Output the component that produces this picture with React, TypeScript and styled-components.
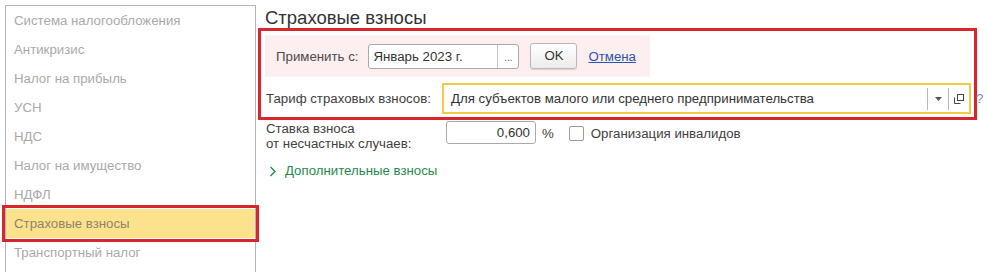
import React from "react";
import styled, { createGlobalStyle } from "styled-components";

const GlobalStyle = createGlobalStyle`
  html, body {
    margin: 0;
    padding: 0;
    background: #ffffff;
    overflow: hidden;
  }
  body {
    font-family: "Liberation Sans", Arial, sans-serif;
    font-size: 13.25px;
    color: #404040;
  }
`;

const sections = [
  "Система налогообложения",
  "Антикризис",
  "Налог на прибыль",
  "УСН",
  "НДС",
  "Налог на имущество",
  "НДФЛ",
  "Страховые взносы",
  "Транспортный налог",
];

const App = () => {
  const selected = "Страховые взносы";

  return (
    <>
      <GlobalStyle />
      <Page>
        <Sidebar>
          {sections.map((item) => (
            <SideItem key={item} $active={item === selected}>
              {item}
            </SideItem>
          ))}
        </Sidebar>

        <Main>
          <Title>Страховые взносы</Title>

          <Highlight>
            <ApplyBar>
              <Label>Применить с:</Label>
              <PeriodField>
                <PeriodValue>Январь 2023 г.</PeriodValue>
                <PickButton>...</PickButton>
              </PeriodField>
              <OkButton>OK</OkButton>
              <CancelLink>Отмена</CancelLink>
            </ApplyBar>

            <TariffRow>
              <TariffLabel>Тариф страховых взносов:</TariffLabel>
              <Select>
                <SelectText>
                  Для субъектов малого или среднего предпринимательства
                </SelectText>
                <SelectButton>
                  <svg width="7" height="4" viewBox="0 0 7 4">
                    <path d="M0 0 H7 L3.5 4 Z" fill="#555" />
                  </svg>
                </SelectButton>
                <SelectButton>
                  <svg width="10" height="10" viewBox="0 0 10 10">
                    <rect
                      x="3.5"
                      y="0.5"
                      width="6"
                      height="6"
                      fill="none"
                      stroke="#444"
                    />
                    <path d="M0.5 3.5 V9.5 H6.5" fill="none" stroke="#444" />
                  </svg>
                </SelectButton>
              </Select>
              <Help>?</Help>
            </TariffRow>
          </Highlight>

          <RateRow>
            <RateLabel>
              Ставка взноса
              <br />
              от несчастных случаев:
            </RateLabel>
            <NumberField>0,600</NumberField>
            <Unit>%</Unit>
            <CheckBox />
            <CheckText>Организация инвалидов</CheckText>
          </RateRow>

          <ExtraLink>
            <svg width="8" height="11" viewBox="0 0 8 11">
              <path
                d="M1.5 1 L6 5.5 L1.5 10"
                fill="none"
                stroke="#1f8a4c"
                strokeWidth="1.4"
              />
            </svg>
            <span>Дополнительные взносы</span>
          </ExtraLink>
        </Main>
      </Page>
    </>
  );
};

export default App;

const Page = styled.div`
  display: flex;
  align-items: flex-start;
  width: 987px;
  height: 272px;
  overflow: hidden;
`;

const Sidebar = styled.div`
  box-sizing: border-box;
  flex-shrink: 0;
  width: 251px;
  height: 267px;
  margin: 5px 0 0 5px;
  border: 1px solid #b4b4b4;
  border-bottom: none;
`;

const SideItem = styled.div<{ $active?: boolean }>`
  height: 29px;
  line-height: 29px;
  padding-left: 8px;
  color: ${(p) => (p.$active ? "#8c8569" : "#a9a9a9")};
  background: ${(p) => (p.$active ? "#fde28e" : "transparent")};
  outline: ${(p) => (p.$active ? "3px solid #d7262e" : "none")};
  outline-offset: 1px;
  position: relative;
`;

const Main = styled.div`
  display: flex;
  flex-direction: column;
  align-items: flex-start;
`;

const Title = styled.div`
  margin: 8px 0 0 9px;
  font-size: 18.5px;
  line-height: 20px;
  color: #333333;
`;

const Highlight = styled.div`
  box-sizing: border-box;
  width: 719px;
  height: 92px;
  margin: 0 0 0 2px;
  border: 3px solid #d7262e;
  padding: 4px 0 0 4px;
`;

const ApplyBar = styled.div`
  display: flex;
  align-items: center;
  width: 385px;
  height: 42px;
  box-sizing: border-box;
  padding-left: 11px;
  background: #fdeef0;
`;

const Label = styled.span`
  color: #4a4a4a;
  margin-right: 10px;
`;

const PeriodField = styled.div`
  box-sizing: border-box;
  display: flex;
  width: 151px;
  height: 25px;
  border: 1px solid #a9a9a9;
  border-radius: 3px;
  background: #ffffff;
  margin-top: 1px;
`;

const PeriodValue = styled.div`
  flex: 1;
  padding-left: 4px;
  line-height: 23px;
  color: #333;
`;

const PickButton = styled.div`
  width: 20px;
  border-left: 1px solid #c4c4c4;
  text-align: center;
  line-height: 25px;
  font-size: 10px;
  color: #555;
`;

const OkButton = styled.div`
  box-sizing: border-box;
  width: 47px;
  height: 26px;
  margin-left: 11px;
  border: 1px solid #b9b9b9;
  border-radius: 3px;
  background: linear-gradient(#ffffff, #ececec);
  box-shadow: 0 1px 1px rgba(0, 0, 0, 0.12);
  text-align: center;
  line-height: 24px;
  color: #333;
`;

const CancelLink = styled.span`
  margin-left: 11px;
  color: #2a55a8;
  text-decoration: underline;
`;

const TariffRow = styled.div`
  display: flex;
  align-items: center;
  margin-top: 6px;
  margin-left: 1px;
  width: 720px;
`;

const TariffLabel = styled.span`
  flex-shrink: 0;
  width: 176px;
  color: #404040;
`;

const Select = styled.div`
  box-sizing: border-box;
  flex-shrink: 0;
  display: flex;
  align-items: center;
  width: 529px;
  height: 31px;
  border: 2px solid #f0cb44;
  background: #ffffff;
`;

const SelectText = styled.div`
  flex: 1;
  padding-left: 7px;
  color: #333;
  white-space: nowrap;
`;

const SelectButton = styled.div`
  display: flex;
  align-items: center;
  justify-content: center;
  width: 20px;
  height: 22px;
  border-left: 1px solid #b8b8b8;
`;

const Help = styled.span`
  margin-left: 5px;
  color: #6d8fc8;
`;

const RateRow = styled.div`
  display: flex;
  align-items: center;
  margin: 1px 0 0 10px;
`;

const RateLabel = styled.div`
  width: 180px;
  line-height: 15px;
  color: #404040;
`;

const NumberField = styled.div`
  box-sizing: border-box;
  width: 90px;
  height: 23px;
  margin-top: -7px;
  padding-right: 5px;
  border: 1px solid #a9a9a9;
  border-radius: 3px;
  text-align: right;
  line-height: 21px;
  color: #333;
`;

const Unit = styled.span`
  margin: -6px 0 0 6px;
`;

const CheckBox = styled.div`
  box-sizing: border-box;
  width: 15px;
  height: 15px;
  margin: -6px 0 0 15px;
  border: 1px solid #9a9a9a;
  border-radius: 2px;
  background: #fff;
`;

const CheckText = styled.span`
  margin: -6px 0 0 7px;
  color: #404040;
`;

const ExtraLink = styled.div`
  display: flex;
  align-items: center;
  gap: 8px;
  margin: 12px 0 0 13px;
  color: #1f8a4c;
  line-height: 16px;
`;
